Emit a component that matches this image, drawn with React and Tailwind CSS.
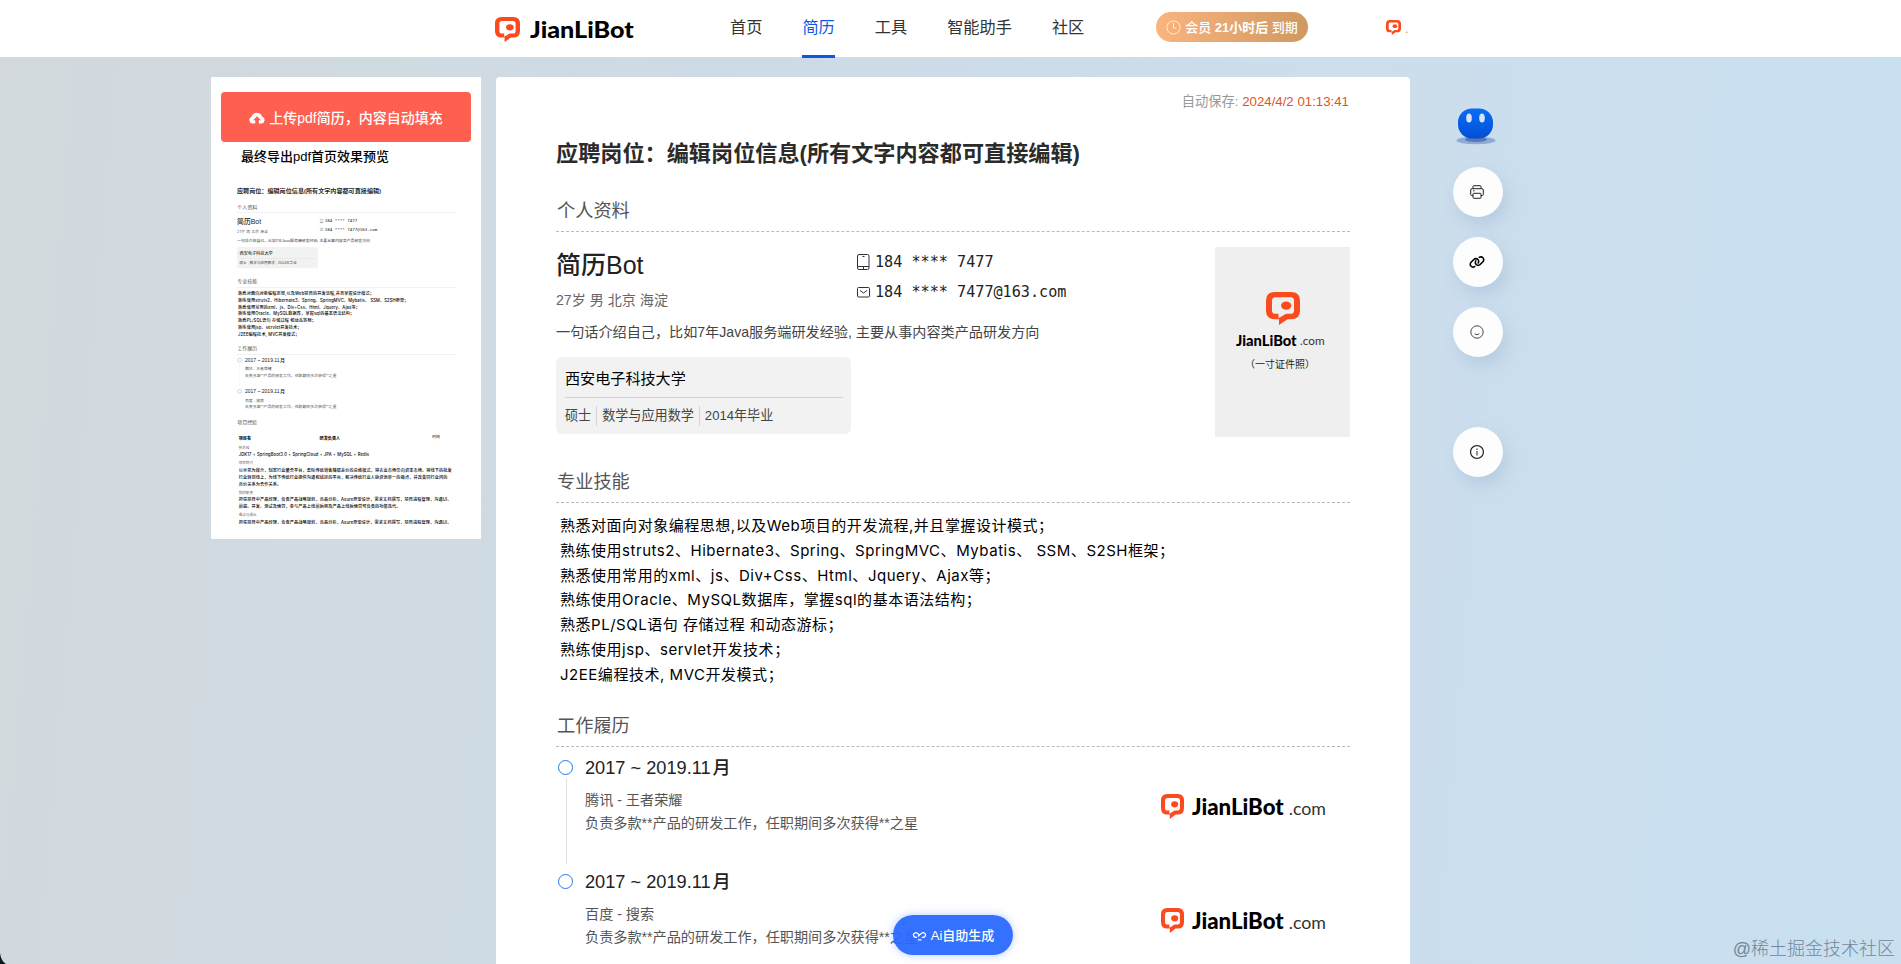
import { AiOutlineInfoCircle } from "react-icons/ai";
import { FaLink } from "react-icons/fa6";

const navItems = ["首页", "简历", "工具", "智能助手", "社区"];

const skills = [
  "熟悉对面向对象编程思想,以及Web项目的开发流程,并且掌握设计模式；",
  "熟练使用struts2、Hibernate3、Spring、SpringMVC、Mybatis、 SSM、S2SH框架；",
  "熟悉使用常用的xml、js、Div+Css、Html、Jquery、Ajax等；",
  "熟练使用Oracle、MySQL数据库，掌握sql的基本语法结构；",
  "熟悉PL/SQL语句 存储过程 和动态游标；",
  "熟练使用jsp、servlet开发技术；",
  "J2EE编程技术, MVC开发模式；",
];

const jobs = [
  { date: "2017 ~ 2019.11", company: "腾讯 - 王者荣耀" },
  { date: "2017 ~ 2019.11", company: "百度 - 搜索" },
];

const projectBlocks = [
  { label: "技术栈", lines: ["JDK17 + SpringBoot3.0 + SpringCloud + JPA + MySQL + Redis"] },
  {
    label: "项目简介",
    lines: [
      "以兰花为媒介，制定行业整合平台，去除传统销售赚取差价的总维模式，将农业市场带向资本市场。将线下的批发",
      "行业转到线上，为线下传统行业提供沟通和链接的平台，解决传统行业人脉资源单一的痛点，并改变同行业间的",
      "竞价关系为合作关系。",
    ],
  },
  {
    label: "我的职责",
    lines: [
      "担任项目中产品经理，负责产品战略规划，竞品分析，Axure原型设计，需求文档撰写，项目进程管理，沟通UI、",
      "前端、开发、测试及运营，参与产品上线前后期及产品上线后运营可负责的功能迭代。",
    ],
  },
  {
    label: "难点与成长",
    lines: ["担任项目中产品经理，负责产品战略规划，竞品分析，Axure原型设计，需求文档撰写，项目进程管理，沟通UI、"],
  },
];

function LogoMark({ className }) {
  return (
    <svg viewBox="0 0 34 34" preserveAspectRatio="none" className={className}>
      <path
        fill="#fb4b1e"
        fillRule="evenodd"
        d="M9 0H25Q34 0 34 9V19Q34 28 25 28H21.500L13 34V28H9Q0 28 0 19V9Q0 0 9 0ZM9.500 5.500Q6 5.500 6 9V19Q6 22.500 9.500 22.500H12.500V27L20 22.500H24.500Q28 22.500 28 19V9Q28 5.500 24.500 5.500Z"
      />
      <ellipse cx="20.200" cy="14" rx="5.200" ry="4.200" fill="#fb4b1e" />
    </svg>
  );
}

function Wordmark({ className, withDomain }) {
  return (
    <svg
      viewBox={withDomain ? "0 0 135 28" : "0 0 93 28"}
      preserveAspectRatio="none"
      className={`overflow-visible ${className}`}
    >
      <text x="0" y="21" fontSize="22" fontWeight="900" fontFamily="Lato, sans-serif" textLength="91" lengthAdjust="spacingAndGlyphs">
        JianLiBot
      </text>
      {withDomain && (
        <text x="96" y="21" fontSize="18" fill="#333" fontFamily="Lato, sans-serif" textLength="37" lengthAdjust="spacingAndGlyphs">
          .com
        </text>
      )}
    </svg>
  );
}

function PhoneIcon() {
  return (
    <svg viewBox="0 0 13 16" className="w-[13px] h-4" fill="none" stroke="#333">
      <rect x="0.500" y="0.500" width="11.500" height="15" rx="1.500" />
      <path d="M0.500 12.500H12M5.500 2.500H7.500M6.500 12.500V15" />
    </svg>
  );
}

function MailIcon() {
  return (
    <svg viewBox="0 0 13 11" className="w-[13px] h-[11px]" fill="none" stroke="#333">
      <rect x="0.500" y="0.500" width="12" height="9.500" rx="1" />
      <path d="M3 3.500L6.500 6L10 3.500" />
    </svg>
  );
}

function CloudIcon() {
  return (
    <svg viewBox="0 0 16 12" className="w-4 h-3">
      <path fill="#fff" d="M3.500 11.500A3.500 3.500 0 0 1 2.500 4.800A5.500 5.500 0 0 1 13 4.500A3.600 3.600 0 0 1 12.500 11.500Z" />
      <path fill="#ff5f4e" d="M8 4.200L12 8.300H9.800V12H6.200V8.300H4Z" />
    </svg>
  );
}

function ClockIcon() {
  return (
    <svg viewBox="0 0 15 15" className="w-[15px] h-[15px]" fill="none" stroke="#fff3e2" strokeWidth="0.900">
      <circle cx="7.500" cy="7.500" r="6.600" />
      <path d="M7.500 3V8H10.500" />
    </svg>
  );
}

function PrinterIcon() {
  return (
    <svg viewBox="0 0 14 14" className="w-3.5 h-3.5" fill="none" stroke="#222">
      <path d="M3 3.500V1.500Q3 .7 3.800 .7H10.200Q11 .7 11 1.500V3.500M3 10.500H1.700Q.7 10.500 .7 9.500V5Q.7 3.700 2 3.700H12Q13.300 3.700 13.300 5V9.500Q13.300 10.500 12.300 10.500H11M3 5.800H4.500" />
      <rect x="3" y="8.300" width="8" height="5" rx="0.800" />
    </svg>
  );
}

function SmileIcon() {
  return (
    <svg viewBox="0 0 14 14" className="w-3.5 h-3.5" fill="none" stroke="#333" strokeWidth="0.900">
      <circle cx="7" cy="7" r="6.200" />
      <path d="M4.700 8.800Q7 10.700 9.300 8.800" />
    </svg>
  );
}

function Robot() {
  return (
    <svg viewBox="0 0 40 37" className="w-10 h-[37px]">
      <defs>
        <linearGradient id="robot" x1="0" y1="0" x2="0" y2="1">
          <stop offset="0" stopColor="#0a6cf5" />
          <stop offset="1" stopColor="#034fd6" />
        </linearGradient>
      </defs>
      <ellipse cx="20" cy="32.500" rx="19.500" ry="3.800" fill="#8eabd3" />
      <ellipse cx="20" cy="31.500" rx="11" ry="2.500" fill="#5877b5" />
      <rect x="2" y="0.500" width="35" height="30" rx="14" fill="url(#robot)" />
      <ellipse cx="13" cy="10" rx="2.800" ry="4.500" fill="#d3e5fb" />
      <ellipse cx="26" cy="10" rx="2.800" ry="4.500" fill="#d3e5fb" />
    </svg>
  );
}

function SectionTitle({ children, preview }) {
  return (
    <h2
      className={`h-[39px] pl-px text-[18.200px] leading-[36px] text-[#555] border-b ${
        preview ? "border-[#ccc]" : "border-dashed border-[#bbb]"
      }`}
    >
      {children}
    </h2>
  );
}

function Profile({ preview }) {
  return (
    <section className="flex justify-between h-[205px] pt-[15px]">
      <div className="w-[659px]">
        <div className="flex h-[71px]">
          <div className="w-[301px]">
            <div className="text-[25px] leading-9 font-medium text-[#222]">简历Bot</div>
            <div className="mt-[5px] text-[14.100px] leading-6 text-[#666]">27岁 男 北京 海淀</div>
          </div>
          <div className="font-['DejaVu_Sans_Mono','Noto_Sans_CJK_SC',monospace] text-[15.150px] leading-[30px] text-[#222]">
            <div className="flex items-center gap-[5px]">
              <PhoneIcon />
              184 **** 7477
            </div>
            <div className="flex items-center gap-[5px]">
              <MailIcon />
              184 **** 7477@163.com
            </div>
          </div>
        </div>
        <div className="text-[14.130px] leading-7 text-[#444]">一句话介绍自己，比如7年Java服务端研发经验, 主要从事内容类产品研发方向</div>
        <div className="mt-[11px] w-[295px] h-[77px] rounded-md bg-[#f2f2f2] pl-[9px] pr-2 pt-1">
          <div className="h-[37px] border-b border-[#d4d4d4] text-[15.100px] leading-9 text-black">西安电子科技大学</div>
          <div className="flex items-center h-9 text-[13.100px] text-[#444]">
            <span className="pr-[5px]">硕士</span>
            <span className="border-l border-[#d4d4d4] px-[5px]">数学与应用数学</span>
            <span className="border-l border-[#d4d4d4] px-[5px]">2014年毕业</span>
          </div>
        </div>
      </div>
      {!preview && (
        <div className="w-[135px] h-[190px] bg-[#efefef] flex flex-col items-center pt-[45px]">
          <LogoMark className="w-[34px] h-[33px]" />
          <Wordmark withDomain className="mt-[7px] mr-1 w-[90px] h-[18px]" />
          <div className="mt-[7px] mr-[5px] text-[10px] leading-4 text-[#222]">（一寸证件照）</div>
        </div>
      )}
    </section>
  );
}

function Timeline({ preview }) {
  return (
    <section className="pt-[9px]">
      {jobs.map((job, i) => (
        <div key={job.company} className={`flex ${i === 0 ? "h-[114px]" : "h-[79px]"}`}>
          <div className="w-[29px] pl-0.5 pt-1">
            <div className="w-[15px] h-[15px] rounded-full border border-[#1f7ae8]" />
            {i === 0 && <div className="ml-2 mt-[3px] w-px h-[86px] bg-[#e2e2e2]" />}
          </div>
          <div className="flex-1">
            <div className="text-[18.200px] leading-6 text-[#222]">
              {job.date}
              <span className="ml-0.5 font-medium">月</span>
            </div>
            <div className="mt-[9px] text-[14.150px] leading-[22.500px] text-[#555]">
              <div>{job.company}</div>
              <div>负责多款**产品的研发工作，任职期间多次获得**之星</div>
            </div>
          </div>
          {!preview && (
            <div className="flex gap-2 pt-[38px] pr-[22px]">
              <LogoMark className="w-[23px] h-[25px]" />
              <Wordmark withDomain className="w-[136px] h-7" />
            </div>
          )}
        </div>
      ))}
    </section>
  );
}

function Projects() {
  return (
    <section className="mt-7 text-[15px] text-black whitespace-nowrap">
      <h2 className="h-[59px] pl-px text-lg leading-[34px] text-[#555]">项目经验</h2>
      <div className="flex h-[37px] pl-1.5 leading-[34px] font-bold">
        <span className="w-[294px]">项目名</span>
        <span className="flex-1">研发负责人</span>
        <span className="w-[84px] text-sm font-normal">时间</span>
      </div>
      {projectBlocks.map((block) => (
        <div key={block.label} className="pl-1.5 pb-1">
          <div className="text-[13px] leading-[26px] text-[#666]">{block.label}</div>
          {block.lines.map((line) => (
            <div
              key={line}
              className="font-[Inter,'Noto_Sans_CJK_SC',sans-serif] leading-[26px] tracking-[0.5px] font-medium"
            >
              {line}
            </div>
          ))}
        </div>
      ))}
    </section>
  );
}

function Resume({ preview = false }) {
  return (
    <article className="w-[794px]">
      <h1 className="h-20 text-[22.150px] leading-[82px] font-bold text-[#2b2b2b] whitespace-nowrap">
        应聘岗位：编辑岗位信息(所有文字内容都可直接编辑)
      </h1>
      <SectionTitle preview={preview}>个人资料</SectionTitle>
      <Profile preview={preview} />
      <div className="mt-[27px]">
        <SectionTitle preview={preview}>专业技能</SectionTitle>
      </div>
      <ul
        className={`h-[205px] pl-1 pt-[11px] font-[Inter,'Noto_Sans_CJK_SC',sans-serif] text-[15px] leading-[24.800px] tracking-[0.530px] text-black whitespace-pre ${
          preview ? "font-medium" : ""
        }`}
      >
        {skills.map((skill) => (
          <li key={skill}>{skill}</li>
        ))}
      </ul>
      <SectionTitle preview={preview}>工作履历</SectionTitle>
      <Timeline preview={preview} />
      {preview && <Projects />}
    </article>
  );
}

function Header() {
  return (
    <header className="flex h-[57px] bg-white pl-[495px]">
      <div className="flex w-[235px] pt-[17px]">
        <LogoMark className="w-[25px] h-[25px]" />
        <Wordmark className="ml-[10px] w-[106px] h-7" />
      </div>
      <nav className="flex w-[426px] gap-10 text-[16.200px] text-[#333]">
        {navItems.map((item) => (
          <a
            key={item}
            className={`h-[58px] leading-[54px] ${item === "简历" ? "relative border-b-3 border-[#0b57e6] text-[#0b57e6]" : ""}`}
          >
            {item}
          </a>
        ))}
      </nav>
      <div className="mt-3 flex h-[30px] w-[152px] items-center justify-center gap-1 rounded-full bg-linear-to-r from-[#fbb47e] to-[#cf9960] pt-px text-[13px] font-medium text-white">
        <ClockIcon />
        <span>
          会员 <b>21小时后</b> 到期
        </span>
      </div>
      <div className="ml-[78px] mt-5 flex gap-1">
        <LogoMark className="w-[15px] h-[15px]" />
        <span className="text-xs leading-[18px] text-[#c9844c]">.</span>
      </div>
    </header>
  );
}

function ToolButton({ children, className = "" }) {
  return (
    <button className={`flex w-[50px] h-[50px] items-center justify-center rounded-full bg-[#fdfdfe] pr-0.5 shadow-[4px_8px_16px_rgba(120,150,190,0.25)] ${className}`}>
      {children}
    </button>
  );
}

function App() {
  return (
    <div className="relative h-[964px] overflow-hidden bg-linear-[95deg,#d3d9dd,#cddbe6_40%,#ccdeed_75%,#c8e0f1] font-['Liberation_Sans','Noto_Sans_CJK_SC',sans-serif]">
      <Header />
      <main className="flex items-start pl-[211px] pt-5">
        <aside className="h-[462px] w-[270px] shrink-0 bg-white px-2.5 pt-[15px]">
          <button className="flex h-[50px] w-full items-center justify-center gap-1 rounded bg-[#ff5f4e] pt-0.5 text-[14px] font-medium text-white">
            <CloudIcon />
            上传pdf简历，内容自动填充
          </button>
          <div className="h-[30px] pl-5 text-[13px] leading-[30px] font-medium text-black">最终导出pdf首页效果预览</div>
          <div className="ml-4 mt-2 h-[344px] w-[219px] overflow-hidden">
            <div className="w-[794px] origin-top-left scale-[0.275]">
              <Resume preview />
            </div>
          </div>
        </aside>

        <div className="ml-[15px] h-[900px] w-[914px] shrink-0 rounded-t bg-white pt-3 pl-[60px]">
          <div className="h-6 pr-[61px] text-right text-[13.250px] leading-[26px] text-[#999]">
            自动保存: <span className="text-[#e0531f]">2024/4/2 01:13:41</span>
          </div>
          <Resume />
        </div>

        <div className="ml-[43px] flex flex-col gap-5 pt-[31px]">
          <div className="ml-[3px] h-[39px]">
            <Robot />
          </div>
          <ToolButton>
            <PrinterIcon />
          </ToolButton>
          <ToolButton>
            <FaLink className="text-base text-black" />
          </ToolButton>
          <ToolButton>
            <SmileIcon />
          </ToolButton>
          <ToolButton className="mt-[50px]">
            <AiOutlineInfoCircle className="text-[16px] text-[#222]" />
          </ToolButton>
        </div>
      </main>

      {/* floating AI action */}
      <button className="absolute left-[893px] top-[915px] flex h-10 w-[120px] items-center justify-center gap-1 rounded-full bg-[#2a69ff]/95 pt-px text-[13px] font-medium text-white shadow-[0_0_8px_rgba(42,105,255,0.35)]">
        <svg viewBox="0 0 15 10" className="w-[15px] h-[10px]" fill="none" stroke="#fff" strokeWidth="1.200">
          <path d="M5 6A2.300 2.300 0 1 1 5.500 2.400L7.500 4L9.500 2.400A2.300 2.300 0 1 1 10 6M6 8.800H9.500M7.500 4L6 5.500" />
        </svg>
        Ai自助生成
      </button>
      <div className="absolute right-[6px] bottom-[3px] text-[18px] leading-6 font-light text-[#74869a]">@稀土掘金技术社区</div>
      <svg viewBox="0 0 6 11" className="absolute bottom-0 left-0 h-[11px] w-1.5">
        <path d="M0 0Q1 8 6 11H0Z" fill="#0d1a1c" />
      </svg>
    </div>
  );
}

export default App;
